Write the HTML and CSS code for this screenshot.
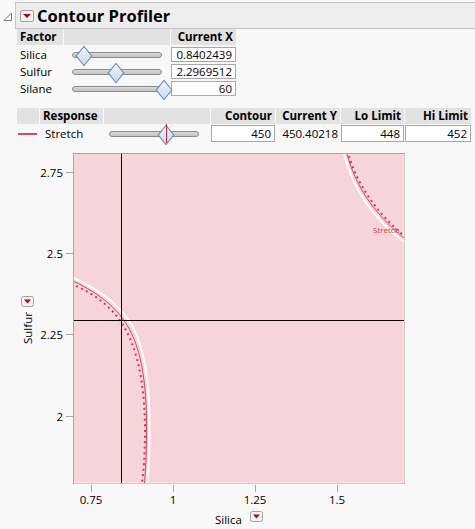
FILE: index.html
```html
<!DOCTYPE html>
<html lang="en">
<head>
    <meta charset="UTF-8">
    <meta name="viewport" content="width=device-width, initial-scale=1.0">
    <title>Contour Profiler</title>
    <link rel="stylesheet" href="styles.css">
</head>
<body>
    <div class="outline">
        <div class="outline-head">
            <svg class="disclose" width="15" height="27" viewBox="0 0 15 27">
                <polygon points="4,18.5 11.5,11 11.5,18.5" fill="#fff" stroke="#7a7a7a" stroke-width="1"/>
            </svg>
            <div class="title-bar">
                <span class="menu-btn"><span class="tri"></span></span>
                <span class="title">Contour Profiler</span>
            </div>
        </div>

        <div class="outline-body">
            <div class="factor-table">
                <div class="th">Factor</div>
                <div class="th"></div>
                <div class="th right">Current X</div>

                <div class="td">Silica</div>
                <div class="td"><div class="slider"><span class="track"></span><span class="thumb" style="left: 6px"></span></div></div>
                <div class="td"><div class="num-box">0.8402439</div></div>

                <div class="td">Sulfur</div>
                <div class="td"><div class="slider"><span class="track"></span><span class="thumb" style="left: 38px"></span></div></div>
                <div class="td"><div class="num-box">2.2969512</div></div>

                <div class="td">Silane</div>
                <div class="td"><div class="slider"><span class="track"></span><span class="thumb" style="left: 86px"></span></div></div>
                <div class="td"><div class="num-box">60</div></div>
            </div>

            <div class="response-table">
                <div class="th"></div>
                <div class="th">Response</div>
                <div class="th"></div>
                <div class="th right">Contour</div>
                <div class="th right">Current Y</div>
                <div class="th right">Lo Limit</div>
                <div class="th right">Hi Limit</div>

                <div class="td"><span class="legend-line"></span></div>
                <div class="td">Stretch</div>
                <div class="td"><div class="slider resp"><span class="track"></span><span class="thumb" style="left: 51px"></span><span class="marker" style="left: 57px"></span></div></div>
                <div class="td"><div class="num-box">450</div></div>
                <div class="td right plain">450.40218</div>
                <div class="td"><div class="num-box">448</div></div>
                <div class="td"><div class="num-box">452</div></div>
            </div>

            <svg class="plot" width="475" height="384" viewBox="0 145 475 384">
                <!-- frame -->
                <rect x="73.5" y="152.5" width="331" height="330" fill="#f6d4d9" stroke="#a6a6a6"/>
                <line x1="74" y1="482" x2="404" y2="482" stroke="#fbeef0"/>
                <line x1="404" y1="153" x2="404" y2="482" stroke="#fbeef0"/>

                <!-- contour, lower left -->
                <path d="M74,277 C100,290 125,305 137,335 C146,358 150,390 149.5,430 C149.5,455 148.5,470 147.5,482" fill="none" stroke="#fff" stroke-width="2"/>
                <path d="M74,280.5 C98,292 122,308 134,338 C143,360 147,392 146.5,430 C146.5,455 145.5,470 144.5,482" fill="none" stroke="#d04a60" stroke-width="1"/>
                <path d="M76,285 C100,296 120,312 131,340 C140,362 145,392 145,430 C145,455 143.5,470 142,482" fill="none" stroke="#d03a55" stroke-width="2" stroke-dasharray="2 3.5"/>

                <!-- contour, upper right -->
                <path d="M344,153 C352,185 370,215 404,241" fill="none" stroke="#fff" stroke-width="2"/>
                <path d="M347,153 C355,183 372,211 404,237" fill="none" stroke="#d04a60" stroke-width="1"/>
                <path d="M349,155 C357,182 375,210 403,234" fill="none" stroke="#d03a55" stroke-width="2" stroke-dasharray="2 3.5"/>
                <text x="373" y="232" class="curve-label">Stretch</text>

                <!-- crosshair -->
                <line x1="121.5" y1="153" x2="121.5" y2="482" stroke="#000"/>
                <line x1="74" y1="319.5" x2="404" y2="319.5" stroke="#000"/>

                <!-- y axis -->
                <g stroke="#a6a6a6">
                    <line x1="66" y1="171.5" x2="73" y2="171.5"/>
                    <line x1="66" y1="252.5" x2="73" y2="252.5"/>
                    <line x1="66" y1="333.5" x2="73" y2="333.5"/>
                    <line x1="66" y1="415.5" x2="73" y2="415.5"/>
                </g>
                <g class="tick-y">
                    <text x="63" y="176">2.75</text>
                    <text x="63" y="257">2.5</text>
                    <text x="63" y="338">2.25</text>
                    <text x="63" y="420">2</text>
                </g>

                <!-- x axis -->
                <g stroke="#a6a6a6">
                    <line x1="91.5" y1="484" x2="91.5" y2="491"/>
                    <line x1="173.5" y1="484" x2="173.5" y2="491"/>
                    <line x1="255.5" y1="484" x2="255.5" y2="491"/>
                    <line x1="337.5" y1="484" x2="337.5" y2="491"/>
                </g>
                <g class="tick-x">
                    <text x="91" y="503">0.75</text>
                    <text x="173" y="503">1</text>
                    <text x="255" y="503">1.25</text>
                    <text x="337" y="503">1.5</text>
                </g>

                <!-- axis titles -->
                <text class="axis-title" x="215" y="523">Silica</text>
                <g transform="translate(250,510)">
                    <rect x="0.5" y="0.5" width="12" height="10" rx="2" fill="#f4f4f4" stroke="#a0a0a0"/>
                    <polygon points="3,3.5 10,3.5 6.5,7.5" fill="#c00000"/>
                </g>
                <text class="axis-title" transform="translate(32,343) rotate(-90)">Sulfur</text>
                <g transform="translate(21,295)">
                    <rect x="0.5" y="0.5" width="12" height="10" rx="2" fill="#f4f4f4" stroke="#a0a0a0"/>
                    <polygon points="3,3.5 10,3.5 6.5,7.5" fill="#c00000"/>
                </g>
            </svg>
        </div>
    </div>
</body>
</html>
```

FILE: styles.css
```css
body {
    margin: 0;
    background: #f8f8f8;
    font-family: "Open Sans", "Noto Sans", sans-serif;
    font-size: 11.5px;
    color: #000;
}
.outline-head {
    display: flex;
    padding-top: 2px;
}
.disclose {
    display: block;
    flex: none;
}
.title-bar {
    flex: 1;
    display: flex;
    align-items: center;
    gap: 3px;
    height: 25px;
    padding-left: 4px;
    background: #ededed;
    border: 1px solid #c4c4c4;
    border-right: none;
}
.menu-btn {
    width: 12px;
    height: 10px;
    border: 1px solid #a0a0a0;
    border-radius: 2px;
    background: #f4f4f4;
    display: flex;
    align-items: center;
    justify-content: center;
}
.tri {
    width: 0;
    height: 0;
    border-left: 4px solid transparent;
    border-right: 4px solid transparent;
    border-top: 4px solid #c00000;
}
.title {
    font-weight: bold;
    font-size: 16.5px;
}
.outline-body {
    padding-left: 17px;
}
.factor-table {
    display: grid;
    grid-template-columns: 46px 106px 65px;
    grid-auto-rows: 17px;
    column-gap: 1px;
    row-gap: 0;
    margin-top: 0;
}
.factor-table .th {
    height: 16px;
}
.response-table {
    display: grid;
    grid-template-columns: 22px 63px 106px 64px 64px 63px 66px;
    grid-template-rows: 16px 19px;
    column-gap: 1px;
    margin-top: 11px;
}
.th {
    background: #e2e2e2;
    font-weight: bold;
    padding: 0 3px;
    line-height: 16px;
    white-space: nowrap;
}
.td {
    padding: 0 3px;
    display: flex;
    align-items: center;
    white-space: nowrap;
}
.right {
    text-align: right;
    justify-content: flex-end;
}
.factor-table .td:nth-child(3n),
.response-table .td {
    padding: 0;
}
.response-table .td:nth-child(9) {
    padding-left: 5px;
}
.plain {
    padding-right: 2px !important;
}
.num-box {
    width: 100%;
    height: 15px;
    box-sizing: border-box;
    background: #fff;
    border: 1px solid #a8a8a8;
    text-align: right;
    padding-right: 3px;
    line-height: 13px;
}
.response-table .num-box {
    height: 17px;
    line-height: 15px;
}
.slider {
    position: relative;
    width: 90px;
    height: 16px;
    margin-left: 5px;
}
.slider.resp {
    width: 90px;
    margin-left: 5px;
    height: 19px;
}
.track {
    display: block;
    position: absolute;
    left: 0;
    right: 0;
    top: 50%;
    height: 6px;
    margin-top: -3px;
    box-sizing: border-box;
    border: 1px solid #8c8c8c;
    border-radius: 3px;
    background: linear-gradient(#d8d8d8, #c4c4c4);
}
.thumb {
    position: absolute;
    top: 50%;
    width: 10px;
    height: 10px;
    margin-top: -5px;
    background: linear-gradient(135deg, #eef4fb, #c9daee);
    border: 1px solid #6f8fb3;
    transform: scaleY(1.25) rotate(45deg);
}
.marker {
    display: block;
    position: absolute;
    z-index: 2;
    top: 0;
    height: 19px;
    width: 1px;
    background: #c8203a;
}
.legend-line {
    display: block;
    width: 19px;
    height: 2px;
    margin-left: 1px;
    background: #d04a60;
}
.plot {
    display: block;
    margin-left: -17px;
    margin-top: 3px;
}
.plot text {
    font-family: "Open Sans", "Noto Sans", sans-serif;
    font-size: 11.5px;
    fill: #000;
}
.plot .tick-y text {
    text-anchor: end;
}
.plot .tick-x text {
    text-anchor: middle;
}
.plot .curve-label {
    font-size: 8px;
    fill: #c8405a;
}
```
